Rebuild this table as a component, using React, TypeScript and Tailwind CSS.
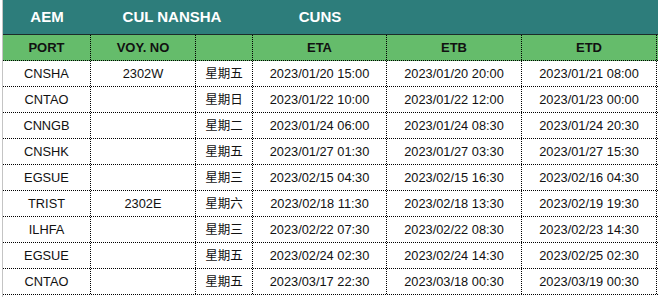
import React from 'react';

interface Row {
    port: string;
    voy: string;
    day: string;
    eta: string;
    etb: string;
    etd: string;
}

const ROWS: Row[] = [
    { port: 'CNSHA', voy: '2302W', day: '星期五', eta: '2023/01/20 15:00', etb: '2023/01/20 20:00', etd: '2023/01/21 08:00' },
    { port: 'CNTAO', voy: '', day: '星期日', eta: '2023/01/22 10:00', etb: '2023/01/22 12:00', etd: '2023/01/23 00:00' },
    { port: 'CNNGB', voy: '', day: '星期二', eta: '2023/01/24 06:00', etb: '2023/01/24 08:30', etd: '2023/01/24 20:30' },
    { port: 'CNSHK', voy: '', day: '星期五', eta: '2023/01/27 01:30', etb: '2023/01/27 03:30', etd: '2023/01/27 15:30' },
    { port: 'EGSUE', voy: '', day: '星期三', eta: '2023/02/15 04:30', etb: '2023/02/15 16:30', etd: '2023/02/16 04:30' },
    { port: 'TRIST', voy: '2302E', day: '星期六', eta: '2023/02/18 11:30', etb: '2023/02/18 13:30', etd: '2023/02/19 19:30' },
    { port: 'ILHFA', voy: '', day: '星期三', eta: '2023/02/22 07:30', etb: '2023/02/22 08:30', etd: '2023/02/23 14:30' },
    { port: 'EGSUE', voy: '', day: '星期五', eta: '2023/02/24 02:30', etb: '2023/02/24 14:30', etd: '2023/02/25 02:30' },
    { port: 'CNTAO', voy: '', day: '星期五', eta: '2023/03/17 22:30', etb: '2023/03/18 00:30', etd: '2023/03/19 00:30' },
];

const cols = 'grid grid-cols-[88px_105px_57px_134px_135px_135px]';
const cell = 'flex items-center justify-center border-r border-dotted border-black';

export default function App() {
    return (
        <div
            className="w-[658px] h-[297px] overflow-hidden bg-white pl-[2px]"
            style={{ fontFamily: '"Liberation Sans", Arial, "Noto Sans CJK SC", sans-serif' }}
        >
            <div className="border-l border-[#c4c4c4] h-full">
                {/* Title bar */}
                <div className={`${cols} h-[35px] bg-[#2d7d7b] border-b border-[#1c2b2a] text-white font-bold text-[15px]`}>
                    <div className="flex items-center justify-center">AEM</div>
                    <div className="col-span-2 flex items-center justify-center">CUL NANSHA</div>
                    <div className="flex items-center justify-center">CUNS</div>
                </div>

                {/* Column headers */}
                <div className={`${cols} h-[26px] bg-[#65bc6b] border-b border-dotted border-black text-[#111] font-bold text-[13px]`}>
                    <div className={cell}>PORT</div>
                    <div className={cell}>VOY. NO</div>
                    <div className={cell}></div>
                    <div className={cell}>ETA</div>
                    <div className={cell}>ETB</div>
                    <div className={cell}>ETD</div>
                </div>

                {/* Rows */}
                {ROWS.map((r, i) => (
                    <div key={i} className={`${cols} h-[26px] border-b border-dotted border-black text-[12.8px] text-[#111]`}>
                        <div className={cell}>{r.port}</div>
                        <div className={cell}>{r.voy}</div>
                        <div className={`${cell} leading-none`} style={{ fontFamily: '"Noto Sans CJK SC", sans-serif' }}>
                            <span className="text-[12.5px] leading-none">{r.day}</span>
                        </div>
                        <div className={cell}>{r.eta}</div>
                        <div className={cell}>{r.etb}</div>
                        <div className={cell}>{r.etd}</div>
                    </div>
                ))}
            </div>
        </div>
    );
}
